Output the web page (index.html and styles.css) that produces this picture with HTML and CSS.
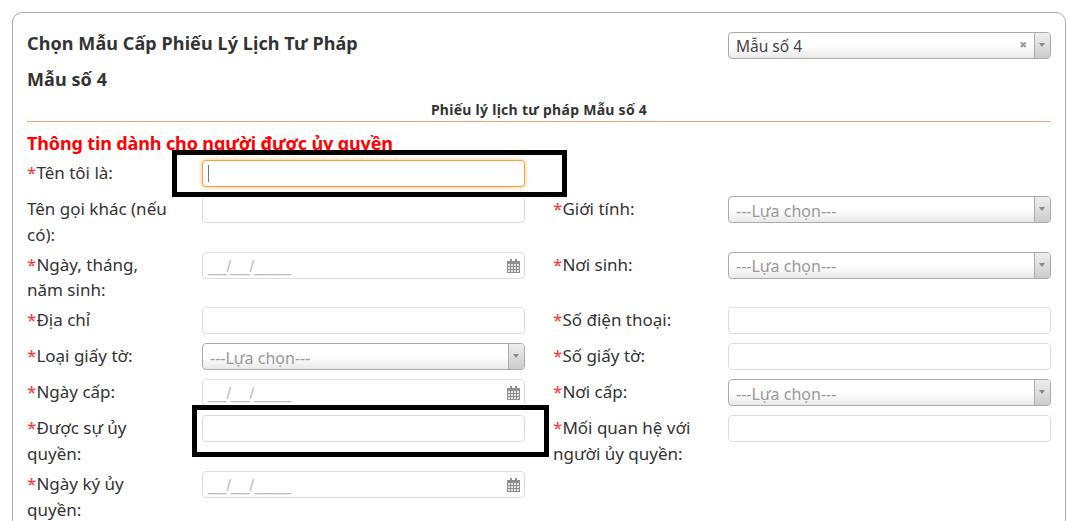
FILE: index.html
```html
<!DOCTYPE html>
<html lang="vi">
<head>
<meta charset="utf-8">
<title>Phiếu lý lịch tư pháp</title>
<link rel="stylesheet" href="styles.css">
</head>
<body>
<main class="card">
  <div class="head">
    <div class="titles">
      <h2 class="title">Chọn Mẫu Cấp Phiếu Lý Lịch Tư Pháp</h2>
      <h2 class="title">Mẫu số 4</h2>
    </div>
    <div class="select select-value">
      <span class="select-text">Mẫu số 4</span>
      <span class="clear">✖</span>
      <span class="arrow"></span>
    </div>
  </div>
  <h3 class="form-name">Phiếu lý lịch tư pháp Mẫu số 4</h3>
  <h3 class="section">Thông tin dành cho người được ủy quyền</h3>

  <div class="grid">
    <label class="label"><b>*</b>Tên tôi là:</label>
    <div class="field"><div class="input focus"><i class="caret"></i></div></div>
    <div class="label"></div>
    <div class="field"></div>

    <label class="label">Tên gọi khác (nếu có):</label>
    <div class="field"><div class="input"></div></div>
    <label class="label"><b>*</b>Giới tính:</label>
    <div class="field"><div class="select"><span class="select-text muted">---Lựa chọn---</span><span class="arrow"></span></div></div>

    <label class="label"><b>*</b>Ngày, tháng, năm sinh:</label>
    <div class="field"><div class="input date"><span class="mask">__/__/____</span><svg class="cal" viewBox="0 0 13 14"><path d="M3 0h2v3H3zM8 0h2v3H8z" fill="#8f8f8f"/><path d="M0 2h13v12H0z" fill="#8f8f8f"/><path d="M1 5h2v2H1zM4 5h2v2H4zM7 5h2v2H7zM10 5h2v2h-2zM1 8h2v2H1zM4 8h2v2H4zM7 8h2v2H7zM10 8h2v2h-2zM1 11h2v2H1zM4 11h2v2H4zM7 11h2v2H7zM10 11h2v2h-2z" fill="#e4e4e4"/></svg></div></div>
    <label class="label"><b>*</b>Nơi sinh:</label>
    <div class="field"><div class="select"><span class="select-text muted">---Lựa chọn---</span><span class="arrow"></span></div></div>

    <label class="label"><b>*</b>Địa chỉ</label>
    <div class="field"><div class="input"></div></div>
    <label class="label"><b>*</b>Số điện thoại:</label>
    <div class="field"><div class="input"></div></div>

    <label class="label"><b>*</b>Loại giấy tờ:</label>
    <div class="field"><div class="select"><span class="select-text muted">---Lựa chọn---</span><span class="arrow"></span></div></div>
    <label class="label"><b>*</b>Số giấy tờ:</label>
    <div class="field"><div class="input"></div></div>

    <label class="label"><b>*</b>Ngày cấp:</label>
    <div class="field"><div class="input date"><span class="mask">__/__/____</span><svg class="cal" viewBox="0 0 13 14"><path d="M3 0h2v3H3zM8 0h2v3H8z" fill="#8f8f8f"/><path d="M0 2h13v12H0z" fill="#8f8f8f"/><path d="M1 5h2v2H1zM4 5h2v2H4zM7 5h2v2H7zM10 5h2v2h-2zM1 8h2v2H1zM4 8h2v2H4zM7 8h2v2H7zM10 8h2v2h-2zM1 11h2v2H1zM4 11h2v2H4zM7 11h2v2H7zM10 11h2v2h-2z" fill="#e4e4e4"/></svg></div></div>
    <label class="label"><b>*</b>Nơi cấp:</label>
    <div class="field"><div class="select"><span class="select-text muted">---Lựa chọn---</span><span class="arrow"></span></div></div>

    <label class="label"><b>*</b>Được sự ủy quyền:</label>
    <div class="field"><div class="input"></div></div>
    <label class="label"><b>*</b>Mối quan hệ với người ủy quyền:</label>
    <div class="field"><div class="input"></div></div>

    <label class="label"><b>*</b>Ngày ký ủy quyền:</label>
    <div class="field"><div class="input date"><span class="mask">__/__/____</span><svg class="cal" viewBox="0 0 13 14"><path d="M3 0h2v3H3zM8 0h2v3H8z" fill="#8f8f8f"/><path d="M0 2h13v12H0z" fill="#8f8f8f"/><path d="M1 5h2v2H1zM4 5h2v2H4zM7 5h2v2H7zM10 5h2v2h-2zM1 8h2v2H1zM4 8h2v2H4zM7 8h2v2H7zM10 8h2v2h-2zM1 11h2v2H1zM4 11h2v2H4zM7 11h2v2H7zM10 11h2v2h-2z" fill="#e4e4e4"/></svg></div></div>
    <div class="label"></div>
    <div class="field"></div>
  </div>

  <div class="mark mark-one"></div>
  <div class="mark mark-two"></div>
</main>
</body>
</html>
```

FILE: styles.css
```css
* { box-sizing: border-box; }
html, body { height: 100%; }
body {
  margin: 0;
  padding: 12px 0 0 12px;
  background: #fff;
  color: #333;
  font-family: "Noto Sans", "Liberation Sans", sans-serif;
  font-size: 16px;
  overflow: hidden;
}
.card {
  position: relative;
  height: 800px;
  border: 1px solid #aaa;
  border-radius: 10px 10px 0 0;
  padding: 18px 14px 0 14px;
}
.head {
  display: flex;
  justify-content: space-between;
  align-items: flex-start;
  height: 70px;
}
.title {
  margin: 0;
  font-size: 18px;
  line-height: 36px;
  font-weight: 700;
  letter-spacing: .09px;
  color: #333;
}
.titles { margin-top: -6px; }
.form-name {
  margin: 0;
  height: 21px;
  border-bottom: 1px solid #eea46f;
  font-size: 14px;
  line-height: 17px;
  font-weight: 700;
  letter-spacing: .27px;
  text-align: center;
}
.section {
  margin: 11px 0 0;
  height: 17px;
  font-size: 18px;
  line-height: 20px;
  font-weight: 700;
  letter-spacing: -.13px;
  color: #f00;
}
.grid {
  display: grid;
  grid-template-columns: 175px 323px 203px 323px;
  margin-top: 10px;
}
.label {
  font-size: 17px;
  line-height: 25.67px;
  padding-right: 28px;
  margin-bottom: 4.33px;
}
.label:nth-child(4n+3) { padding-left: 28px; padding-right: 0; }
.label b { color: #f33; font-weight: 400; }
.field { padding-bottom: 9px; }
.input, .select {
  position: relative;
  width: 323px;
  height: 27px;
  border-radius: 4px;
  font-size: 16px;
}
.input {
  border: 1px solid #ddd;
  background: #fff;
}
.focus {
  border-color: #f9a13d;
  box-shadow: 0 0 4px rgba(249, 161, 61, .75);
}
.caret {
  position: absolute;
  left: 5px;
  top: 4px;
  width: 1px;
  height: 17px;
  background: #777;
}
.date .mask {
  position: absolute;
  left: 5px;
  top: 1px;
  font-family: "Liberation Sans", sans-serif;
  font-size: 16.6px;
  line-height: 25px;
  color: #bbb;
}
.cal {
  position: absolute;
  right: 4px;
  top: 6px;
  width: 13px;
  height: 14px;
}
.select {
  display: flex;
  align-items: center;
  border: 1px solid #aaa;
  background: linear-gradient(#fff 50%, #e9e9e9);
  padding-left: 7px;
}
.select-value { margin-top: 1px; }
.select-value .select-text { font-size: 15.5px; }
.select-text { flex: 1; color: #444; line-height: 27px; padding-top: 1px; }
.muted { color: #999; padding-top: 3px; line-height: 25px; }
.clear {
  color: #999;
  font-family: "DejaVu Sans", sans-serif;
  font-size: 9px;
  line-height: 25px;
  margin-right: 7px;
}
.arrow {
  position: relative;
  width: 16px;
  height: 25px;
  border-left: 1px solid #aaa;
  border-radius: 0 3px 3px 0;
  background: linear-gradient(#eee, #ccc);
}
.arrow::after {
  content: "";
  position: absolute;
  left: 4px;
  top: 10px;
  border: 3px solid transparent;
  border-top: 4px solid #888;
  border-bottom: 0;
}
.mark {
  position: absolute;
  border: 5px solid #000;
}
.mark-one { left: 159px; top: 137px; width: 395px; height: 47px; }
.mark-two { left: 179px; top: 392px; width: 357px; height: 52px; }
```
